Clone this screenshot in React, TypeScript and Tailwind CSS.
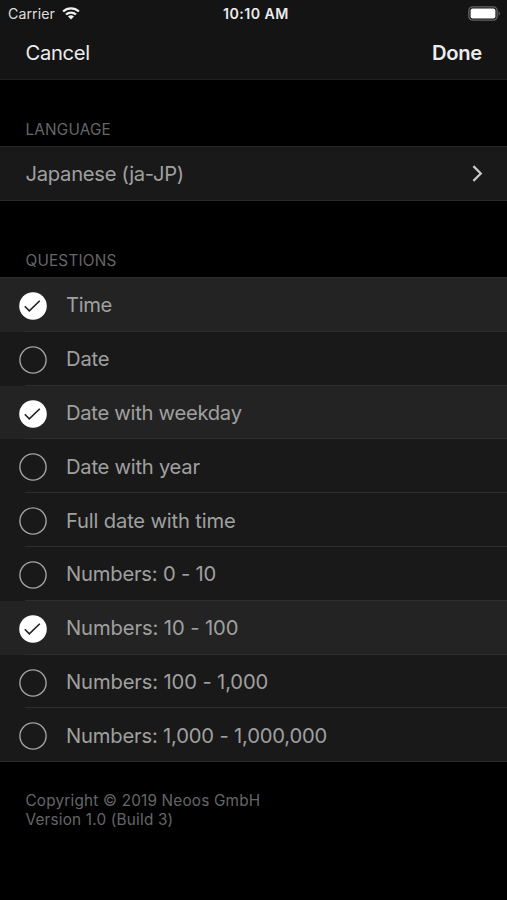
import React, { useState } from 'react';

interface Question {
  id: string;
  label: string;
  tracking: string;
}

const QUESTIONS: Question[] = [
  { id: 'time', label: 'Time', tracking: 'tracking-[-0.35px]' },
  { id: 'date', label: 'Date', tracking: 'tracking-[-0.15px]' },
  { id: 'weekday', label: 'Date with weekday', tracking: 'tracking-[-0.28px]' },
  { id: 'year', label: 'Date with year', tracking: 'tracking-[-0.25px]' },
  { id: 'full', label: 'Full date with time', tracking: 'tracking-[-0.17px]' },
  { id: 'n10', label: 'Numbers: 0 - 10', tracking: 'tracking-[-0.2px]' },
  { id: 'n100', label: 'Numbers: 10 - 100', tracking: 'tracking-[-0.1px]' },
  { id: 'n1000', label: 'Numbers: 100 - 1,000', tracking: 'tracking-[-0.13px]' },
  { id: 'n1000000', label: 'Numbers: 1,000 - 1,000,000', tracking: 'tracking-[-0.18px]' },
];

const WifiIcon = () => (
  <svg width="18" height="13" viewBox="0 0 18 13" fill="none" stroke="#f0f0f0" strokeWidth="2.3">
    <path d="M1.1 4.5C5.6.3 12.4.3 16.9 4.5" />
    <path d="M4 7.5C6.8 4.9 11.2 4.9 14 7.5" />
    <path d="M9 12.4 6 9.4C7.8 7.9 10.2 7.9 12 9.4Z" fill="#f0f0f0" stroke="none" />
  </svg>
);

const BatteryIcon = () => (
  <svg width="33" height="15" viewBox="0 0 33 15" fill="none">
    <rect x="0.9" y="0.9" width="28.2" height="13.2" rx="3.8" stroke="#636363" strokeWidth="1.4" />
    <rect x="2.6" y="2.6" width="24.8" height="9.8" rx="2" fill="#fff" />
    <path d="M30.6 5.2C32.3 6 32.3 9 30.6 9.8Z" fill="#636363" />
  </svg>
);

const CheckCircle = ({ checked }: { checked: boolean }) => (
  <svg className="shrink-0" width="28" height="28" viewBox="0 0 28 28" fill="none">
    {checked ? (
      <>
        <circle cx="14" cy="14" r="13.8" fill="#fff" />
        <path d="M5.8 14.3 10.3 18.9 20.8 8.7" stroke="#222" strokeWidth="1.6" />
      </>
    ) : (
      <circle cx="14" cy="14" r="13.1" stroke="#a3a3a3" strokeWidth="1.4" />
    )}
  </svg>
);

const SectionTitle = ({ children }: { children: React.ReactNode }) => (
  <h2 className="pl-[25.5px] text-[15.3px] leading-5 tracking-[0.2px] text-[#66666a]">{children}</h2>
);

export default function App() {
  const [selected, setSelected] = useState<string[]>(['time', 'weekday', 'n100']);

  const toggle = (id: string) => {
    setSelected((prev) => (prev.includes(id) ? prev.filter((x) => x !== id) : [...prev, id]));
  };

  return (
    <div className="h-[900px] w-full overflow-hidden bg-black font-['Inter','Liberation_Sans',sans-serif] text-[#a0a0a0]">
      <header className="h-20 border-b border-[#1f1f1f] bg-[#141414]">
        {/* Status bar */}
        <div className="grid h-[27px] grid-cols-3 items-center pl-2 pr-1.5 text-[14.2px] text-[#dedede]">
          <div className="flex items-center gap-[7px]">
            <span className="tracking-[0.05px]">Carrier</span>
            <WifiIcon />
          </div>
          <span className="pl-[3px] text-center font-semibold tracking-[0.45px] text-[#ececec]">10:10 AM</span>
          <div className="flex justify-end">
            <BatteryIcon />
          </div>
        </div>

        {/* Navigation */}
        <nav className="flex h-[52px] items-center justify-between pl-[25.5px] pr-[25px] text-[20.2px] text-[#ececec]">
          <button className="tracking-[-0.3px]">Cancel</button>
          <button className="font-semibold tracking-[-0.3px]">Done</button>
        </nav>
      </header>

      <section className="pt-10">
        <SectionTitle>LANGUAGE</SectionTitle>
        <button className="mt-1.5 flex h-[55px] w-full items-center justify-between border-y border-[#292929] bg-[#191919] pl-[25.5px] pr-6 text-[20.2px] tracking-[-0.28px]">
          <span className="pt-[2px]">Japanese (ja-JP)</span>
          <svg width="11" height="18" viewBox="0 0 11 18" fill="none" stroke="#c9c9c9" strokeWidth="2.2">
            <path d="M1.4 1.1 8.8 8.5 1.4 15.9" />
          </svg>
        </button>
      </section>

      <section className="pt-[50px]">
        <SectionTitle>QUESTIONS</SectionTitle>
        <ul className="mt-1.5 border-y border-[#2c2c2c]">
          {QUESTIONS.map((q, i) => {
            const checked = selected.includes(q.id);
            return (
              <li key={q.id} className={checked ? 'bg-[#232323]' : 'bg-[#191919]'}>
                <button
                  onClick={() => toggle(q.id)}
                  className="flex h-[52.8px] w-full items-center gap-[19.5px] pl-[18.5px] pt-[3.4px] text-left text-[20.2px]"
                >
                  <CheckCircle checked={checked} />
                  <span className={`-mt-px ${q.tracking}`}>{q.label}</span>
                </button>
                {i < QUESTIONS.length - 1 && <div className="ml-[25px] h-px bg-[#2e2e2e]" />}
              </li>
            );
          })}
        </ul>
      </section>

      <footer className="pl-[25.5px] pt-[28.5px] text-[15.3px] leading-[19.5px] tracking-[0.2px] text-[#66666a]">
        <p>Copyright © 2019 Neoos GmbH</p>
        <p>Version 1.0 (Build 3)</p>
      </footer>
    </div>
  );
}
